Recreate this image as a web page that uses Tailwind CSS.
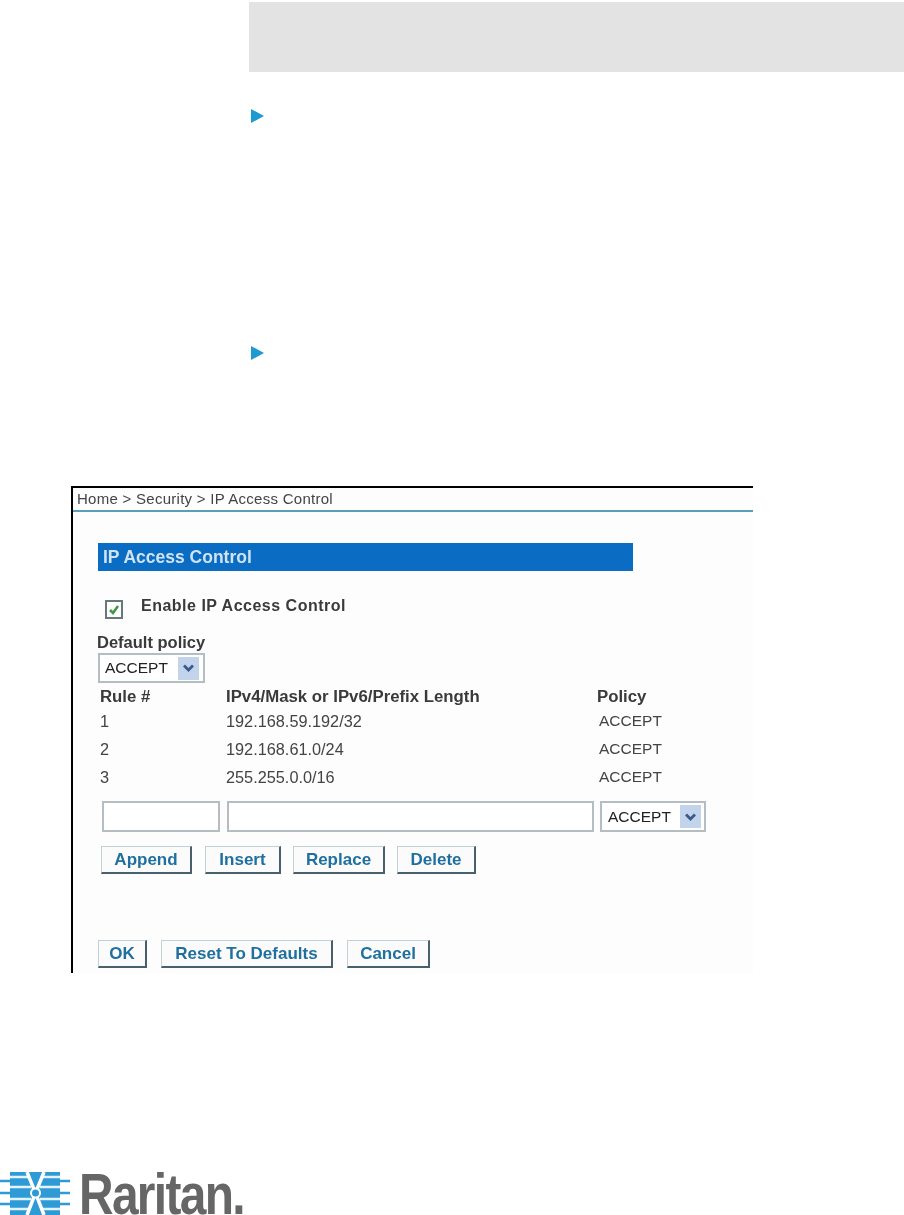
<!doctype html>
<html lang="en">
<head>
<meta charset="utf-8">
<title>IP Access Control</title>
<script src="https://cdn.jsdelivr.net/npm/@tailwindcss/browser@4"></script>
</head>
<body class="bg-white">
<div class="w-[904px] h-[1215px] overflow-hidden font-['Liberation_Sans',Arial,sans-serif] text-[#333]">
  <!-- Note box -->
  <div class="ml-[249px] mt-[2px] h-[70px] bg-[#e3e3e3]"></div>

  <!-- Procedure markers -->
  <div class="ml-[251px] mt-[37px] w-0 h-0 border-y-[7px] border-y-transparent border-l-[13px] border-l-[#1e9ad0]"></div>
  <div class="ml-[251px] mt-[223px] w-0 h-0 border-y-[7px] border-y-transparent border-l-[13px] border-l-[#1e9ad0]"></div>

  <!-- Embedded screenshot -->
  <div class="ml-[71px] mt-[126px] w-[682px] h-[487px] border-t-2 border-l-2 border-black bg-[#fdfdfd]">
    <div class="blur-[0.35px]">
    <div class="h-[24px] border-b-2 border-[#5b9fb5] pl-[4px] pt-[2px] text-[15px] leading-[17px] tracking-[0.27px] text-[#444]">Home &gt; Security &gt; IP Access Control</div>

    <div class="ml-[25px] mt-[31px] w-[535px] h-[28px] bg-[#0a6cc2] pl-[5px] text-[17.5px] leading-[28px] font-bold text-[#cfe3f2]">IP Access Control</div>

    <!-- Enable checkbox -->
    <div class="flex mt-[29px] ml-[32px]">
      <div class="w-[18px] h-[19px] border-2 border-[#66797a] bg-white flex items-center justify-center">
        <svg class="w-[12px] h-[12px]" viewBox="0 0 12 12" fill="none"><path d="M2 6l3 3 5-7" stroke="#3f9a47" stroke-width="2.6"/></svg>
      </div>
      <div class="ml-[18px] -mt-[3px] text-[16px] leading-[18px] font-bold tracking-[0.5px] text-[#3a3a3a]">Enable IP Access Control</div>
    </div>

    <div class="ml-[24px] mt-[14px] text-[16.5px] leading-[18px] font-bold text-[#3a3a3a]">Default policy</div>

    <!-- Default policy select -->
    <div class="ml-[25px] mt-[2px] w-[107px] h-[30px] border-2 border-[#b4bec2] bg-white flex items-center pl-[5px] text-[15.5px] text-[#222]">
      ACCEPT
      <span class="ml-[10px] w-[21px] h-[23px] bg-[#c2d3ec] flex items-center justify-center">
        <svg class="w-[13px] h-[10px]" viewBox="0 0 12 10" fill="none"><path d="M1.5 2.5L6 7l4.5-4.5" stroke="#3a5a8c" stroke-width="2.8"/></svg>
      </span>
    </div>

    <!-- Rules table -->
    <div class="mt-[1px] grid grid-cols-[126px_371px_auto] pl-[27px] text-[16.3px] leading-[28px] text-[#444]">
      <div class="font-bold text-[16.8px] text-[#3a3a3a] h-[23px] leading-[26px]">Rule #</div>
      <div class="font-bold text-[16.8px] text-[#3a3a3a] h-[23px] leading-[26px]">IPv4/Mask or IPv6/Prefix Length</div>
      <div class="font-bold text-[16.8px] text-[#3a3a3a] h-[23px] leading-[26px]">Policy</div>
      <div>1</div><div>192.168.59.192/32</div><div class="ml-[2px] text-[15.5px]">ACCEPT</div>
      <div>2</div><div>192.168.61.0/24</div><div class="ml-[2px] text-[15.5px]">ACCEPT</div>
      <div>3</div><div>255.255.0.0/16</div><div class="ml-[2px] text-[15.5px]">ACCEPT</div>
    </div>

    <!-- New rule inputs -->
    <div class="flex mt-[10px] ml-[29px]">
      <div class="w-[118px] h-[31px] border-2 border-[#b4bec2] bg-white"></div>
      <div class="ml-[7px] w-[367px] h-[31px] border-2 border-[#b4bec2] bg-white"></div>
      <div class="ml-[6px] w-[106px] h-[31px] border-2 border-[#b4bec2] bg-white flex items-center pl-[6px] text-[15.5px] text-[#222]">
        ACCEPT
        <span class="ml-[9px] w-[21px] h-[23px] bg-[#c2d3ec] flex items-center justify-center">
          <svg class="w-[13px] h-[10px]" viewBox="0 0 12 10" fill="none"><path d="M1.5 2.5L6 7l4.5-4.5" stroke="#3a5a8c" stroke-width="2.8"/></svg>
        </span>
      </div>
    </div>

    <!-- Rule buttons -->
    <div class="flex mt-[14px] ml-[28px] text-[17px] font-bold text-[#1f6f9f] leading-[25px] text-center">
      <div class="w-[91px] h-[28px] bg-[#fbfbfb] border border-[#c3d0d6] border-r-2 border-b-2 border-r-[#48606e] border-b-[#48606e]">Append</div>
      <div class="ml-[13px] w-[76px] h-[28px] bg-[#fbfbfb] border border-[#c3d0d6] border-r-2 border-b-2 border-r-[#48606e] border-b-[#48606e]">Insert</div>
      <div class="ml-[12px] w-[92px] h-[28px] bg-[#fbfbfb] border border-[#c3d0d6] border-r-2 border-b-2 border-r-[#48606e] border-b-[#48606e]">Replace</div>
      <div class="ml-[12px] w-[79px] h-[28px] bg-[#fbfbfb] border border-[#c3d0d6] border-r-2 border-b-2 border-r-[#48606e] border-b-[#48606e]">Delete</div>
    </div>

    <!-- Form buttons -->
    <div class="flex mt-[66px] ml-[25px] text-[17px] font-bold text-[#1f6f9f] leading-[25px] text-center">
      <div class="w-[49px] h-[28px] bg-[#fbfbfb] border border-[#c3d0d6] border-r-2 border-b-2 border-r-[#48606e] border-b-[#48606e]">OK</div>
      <div class="ml-[14px] w-[172px] h-[28px] bg-[#fbfbfb] border border-[#c3d0d6] border-r-2 border-b-2 border-r-[#48606e] border-b-[#48606e]">Reset To Defaults</div>
      <div class="ml-[14px] w-[83px] h-[28px] bg-[#fbfbfb] border border-[#c3d0d6] border-r-2 border-b-2 border-r-[#48606e] border-b-[#48606e]">Cancel</div>
    </div>
    </div>
  </div>

  <!-- Raritan logo -->
  <div class="flex mt-[199px] h-[43px] blur-[0.5px]">
    <svg class="w-[72px] h-[43px] shrink-0" viewBox="0 0 72 43">
      <rect x="10" y="0" width="50" height="43" fill="#2f9bd6"/>
      <path d="M10 5H28M43 5H60M10 15H31M40 15H60M10 27H31M40 27H60M10 37H28M43 37H60" stroke="#e4f3fb" stroke-width="2.5"/>
      <path d="M27 0L35.5 21L27 43M44 0L35.5 21L44 43" fill="none" stroke="#fff" stroke-width="3.5"/>
      <path d="M0 9H12M0 21H12M0 32H12M58 9H70M58 21H70M58 32H70" stroke="#2f9bd6" stroke-width="2.5"/>
      <circle cx="35.5" cy="21" r="5.5" fill="#fff"/>
      <circle cx="35.5" cy="21" r="3.5" fill="#2f9bd6"/>
    </svg>
    <div class="ml-[7px] mt-[2px] origin-left scale-x-[0.84] text-[57px] leading-[40px] tracking-[-2px] font-bold text-[#666] whitespace-nowrap">Raritan.</div>
  </div>
</div>
</body>
</html>
